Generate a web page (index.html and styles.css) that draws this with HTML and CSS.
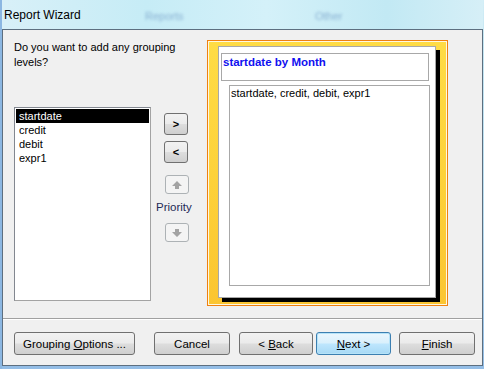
FILE: index.html
```html
<!DOCTYPE html>
<html lang="en">
<head>
  <meta charset="UTF-8">
  <title>Report Wizard</title>
  <link rel="stylesheet" href="styles.css">
</head>
<body>

  <div class="window">
    <div class="titlebar">
      <span class="ghost ghost-1">Reports</span>
      <span class="ghost ghost-2">Other</span>
      <span class="title">Report Wizard</span>
    </div>

    <div class="client">
      <div class="main">
        <div class="left">
          <p class="question">Do you want to add any grouping levels?</p>
          <div class="picker">
            <ul class="fields">
              <li class="selected">startdate</li>
              <li>credit</li>
              <li>debit</li>
              <li>expr1</li>
            </ul>
            <div class="arrows">
              <button class="small">&gt;</button>
              <button class="small second">&lt;</button>
              <button class="prio" disabled>
                <svg width="10" height="8" viewBox="0 0 10 8"><path d="M5 0 L10 5 L7 5 L7 8 L3 8 L3 5 L0 5 Z" fill="#a3a3a3"/></svg>
              </button>
              <span class="prio-label">Priority</span>
              <button class="prio down" disabled>
                <svg width="10" height="8" viewBox="0 0 10 8"><path d="M5 8 L10 3 L7 3 L7 0 L3 0 L3 3 L0 3 Z" fill="#a3a3a3"/></svg>
              </button>
            </div>
          </div>
        </div>

        <div class="preview">
          <div class="page">
            <div class="group-box">startdate by Month</div>
            <div class="detail-box">startdate, credit, debit, expr1</div>
          </div>
        </div>
      </div>

      <div class="separator"></div>

      <div class="actions">
        <button class="btn w-group">Grouping <u>O</u>ptions ...</button>
        <button class="btn w-cancel">Cancel</button>
        <button class="btn w-back">&lt; <u>B</u>ack</button>
        <button class="btn w-next focus"><u>N</u>ext &gt;</button>
        <button class="btn w-finish"><u>F</u>inish</button>
      </div>
    </div>
  </div>

</body>
</html>
```

FILE: styles.css
```css
* {
  box-sizing: border-box;
}

body {
  margin: 0;
  font-family: 'Liberation Sans', Arial, sans-serif;
  font-size: 11px;
  color: #000;
  background: #f0f0f0;
}

.window {
  width: 484px;
  height: 369px;
  display: flex;
  flex-direction: column;
  padding: 0 1px 3px 2px;
  background: linear-gradient(to bottom, #d3eef7 0%, #c4e6f2 10%, #b9dcef 60%, #93bde6 100%);
  box-shadow: inset 2px 0 0 #8cb7e2;
}

/* title bar (aero glass look) */
.titlebar {
  position: relative;
  height: 29px;
  overflow: hidden;
  background: linear-gradient(to right, #d8f0f8 0%, #c6ecf6 30%, #d4f1f9 55%, #c2e9f4 80%, #d6eff7 100%);
}

.title {
  position: relative;
  display: block;
  padding: 8px 0 0 2px;
  font-size: 12px;
  line-height: 14px;
}

.ghost {
  position: absolute;
  color: #5b86b8;
  filter: blur(1.4px);
  opacity: 0.6;
  font-size: 11px;
}

.ghost-1 { left: 143px; top: 10px; }
.ghost-2 { left: 313px; top: 10px; }

.client {
  flex: 1;
  border: 1px solid #5d6f80;
  background: #f0f0f0;
  display: flex;
  flex-direction: column;
}

.main {
  display: flex;
  height: 288px;
  padding: 10px 0 0 11px;
}

.left {
  width: 185px;
}

.question {
  margin: 0;
  height: 67px;
  width: 170px;
  line-height: 15px;
}

.picker {
  display: flex;
}

.fields {
  list-style: none;
  margin: 0;
  padding: 1px 1px;
  width: 137px;
  height: 194px;
  background: #fff;
  border: 1px solid #a3a3a3;
  border-top-color: #828790;
  border-left-color: #828790;
}

.fields li {
  height: 14px;
  line-height: 14px;
  padding-left: 3px;
}

.fields li.selected {
  background: #000;
  color: #fff;
}

.arrows {
  display: flex;
  flex-direction: column;
  align-items: flex-start;
  margin-left: 13px;
  padding-top: 6px;
}

.small {
  width: 24px;
  height: 22px;
  padding: 0;
  font-family: 'Liberation Sans', Arial, sans-serif;
  font-size: 11px;
  font-weight: bold;
  border: 1px solid #707070;
  border-radius: 3px;
  background: linear-gradient(to bottom, #f2f2f2 0%, #ebebeb 48%, #dddddd 52%, #cfcfcf 100%);
}

.small.second {
  margin-top: 6px;
}

.prio {
  width: 24px;
  height: 19px;
  padding: 0;
  margin: 12px 0 0 1px;
  border: 1px solid #adb2b5;
  border-radius: 3px;
  background: #f4f4f4;
  display: flex;
  align-items: center;
  justify-content: center;
}

.prio.down {
  margin-top: 9px;
}

.prio-label {
  margin: 6px 0 0 -8px;
  line-height: 14px;
  color: #1e2a56;
  font-size: 11.5px;
}

/* report preview */
.preview {
  margin-left: 8px;
  width: 241px;
  height: 266px;
  padding: 5px 0 0 10px;
  border: 1px solid #f08010;
  box-shadow: inset 0 0 0 1px #fff8e0;
  background: linear-gradient(to bottom, #ffdc45 0%, #fdd23a 50%, #fbc531 100%);
}

.page {
  width: 218px;
  height: 252px;
  padding: 6px 0 0 2px;
  background: #fff;
  border: 1px solid #a8a8a8;
  box-shadow: 4px 4px 0 #000;
}

.group-box {
  width: 208px;
  height: 28px;
  padding: 1px 0 0 1px;
  border: 1px solid #a8a8a8;
  color: #1010f0;
  font-weight: bold;
  font-size: 11.5px;
  line-height: 14px;
}

.detail-box {
  width: 201px;
  height: 201px;
  margin: 4px 0 0 8px;
  padding: 1px 0 0 1px;
  border: 1px solid #a8a8a8;
  line-height: 13px;
}

.separator {
  margin-top: 0;
  border-top: 1px solid #a0a0a0;
  border-bottom: 1px solid #ffffff;
}

/* bottom buttons */
.actions {
  display: flex;
  padding: 12px 0 0 11px;
}

.btn {
  height: 23px;
  padding: 0;
  font-family: 'Liberation Sans', Arial, sans-serif;
  font-size: 11.5px;
  color: #000;
  border: 1px solid #707070;
  border-radius: 3px;
  background: linear-gradient(to bottom, #f2f2f2 0%, #ebebeb 48%, #dddddd 52%, #cfcfcf 100%);
}

.btn u {
  text-decoration: underline;
}

.btn.focus {
  border-color: #3c7fb1;
  box-shadow: inset 0 0 0 1px #b6e3f8;
  background: linear-gradient(to bottom, #eaf6fd 0%, #d9f0fc 48%, #bee6fd 52%, #a7d9f5 100%);
}

.w-group { width: 121px; }
.w-cancel { width: 76px; margin-left: 19px; }
.w-back { width: 74px; margin-left: 9px; }
.w-next { width: 75px; margin-left: 3px; }
.w-finish { width: 76px; margin-left: 8px; }
```
